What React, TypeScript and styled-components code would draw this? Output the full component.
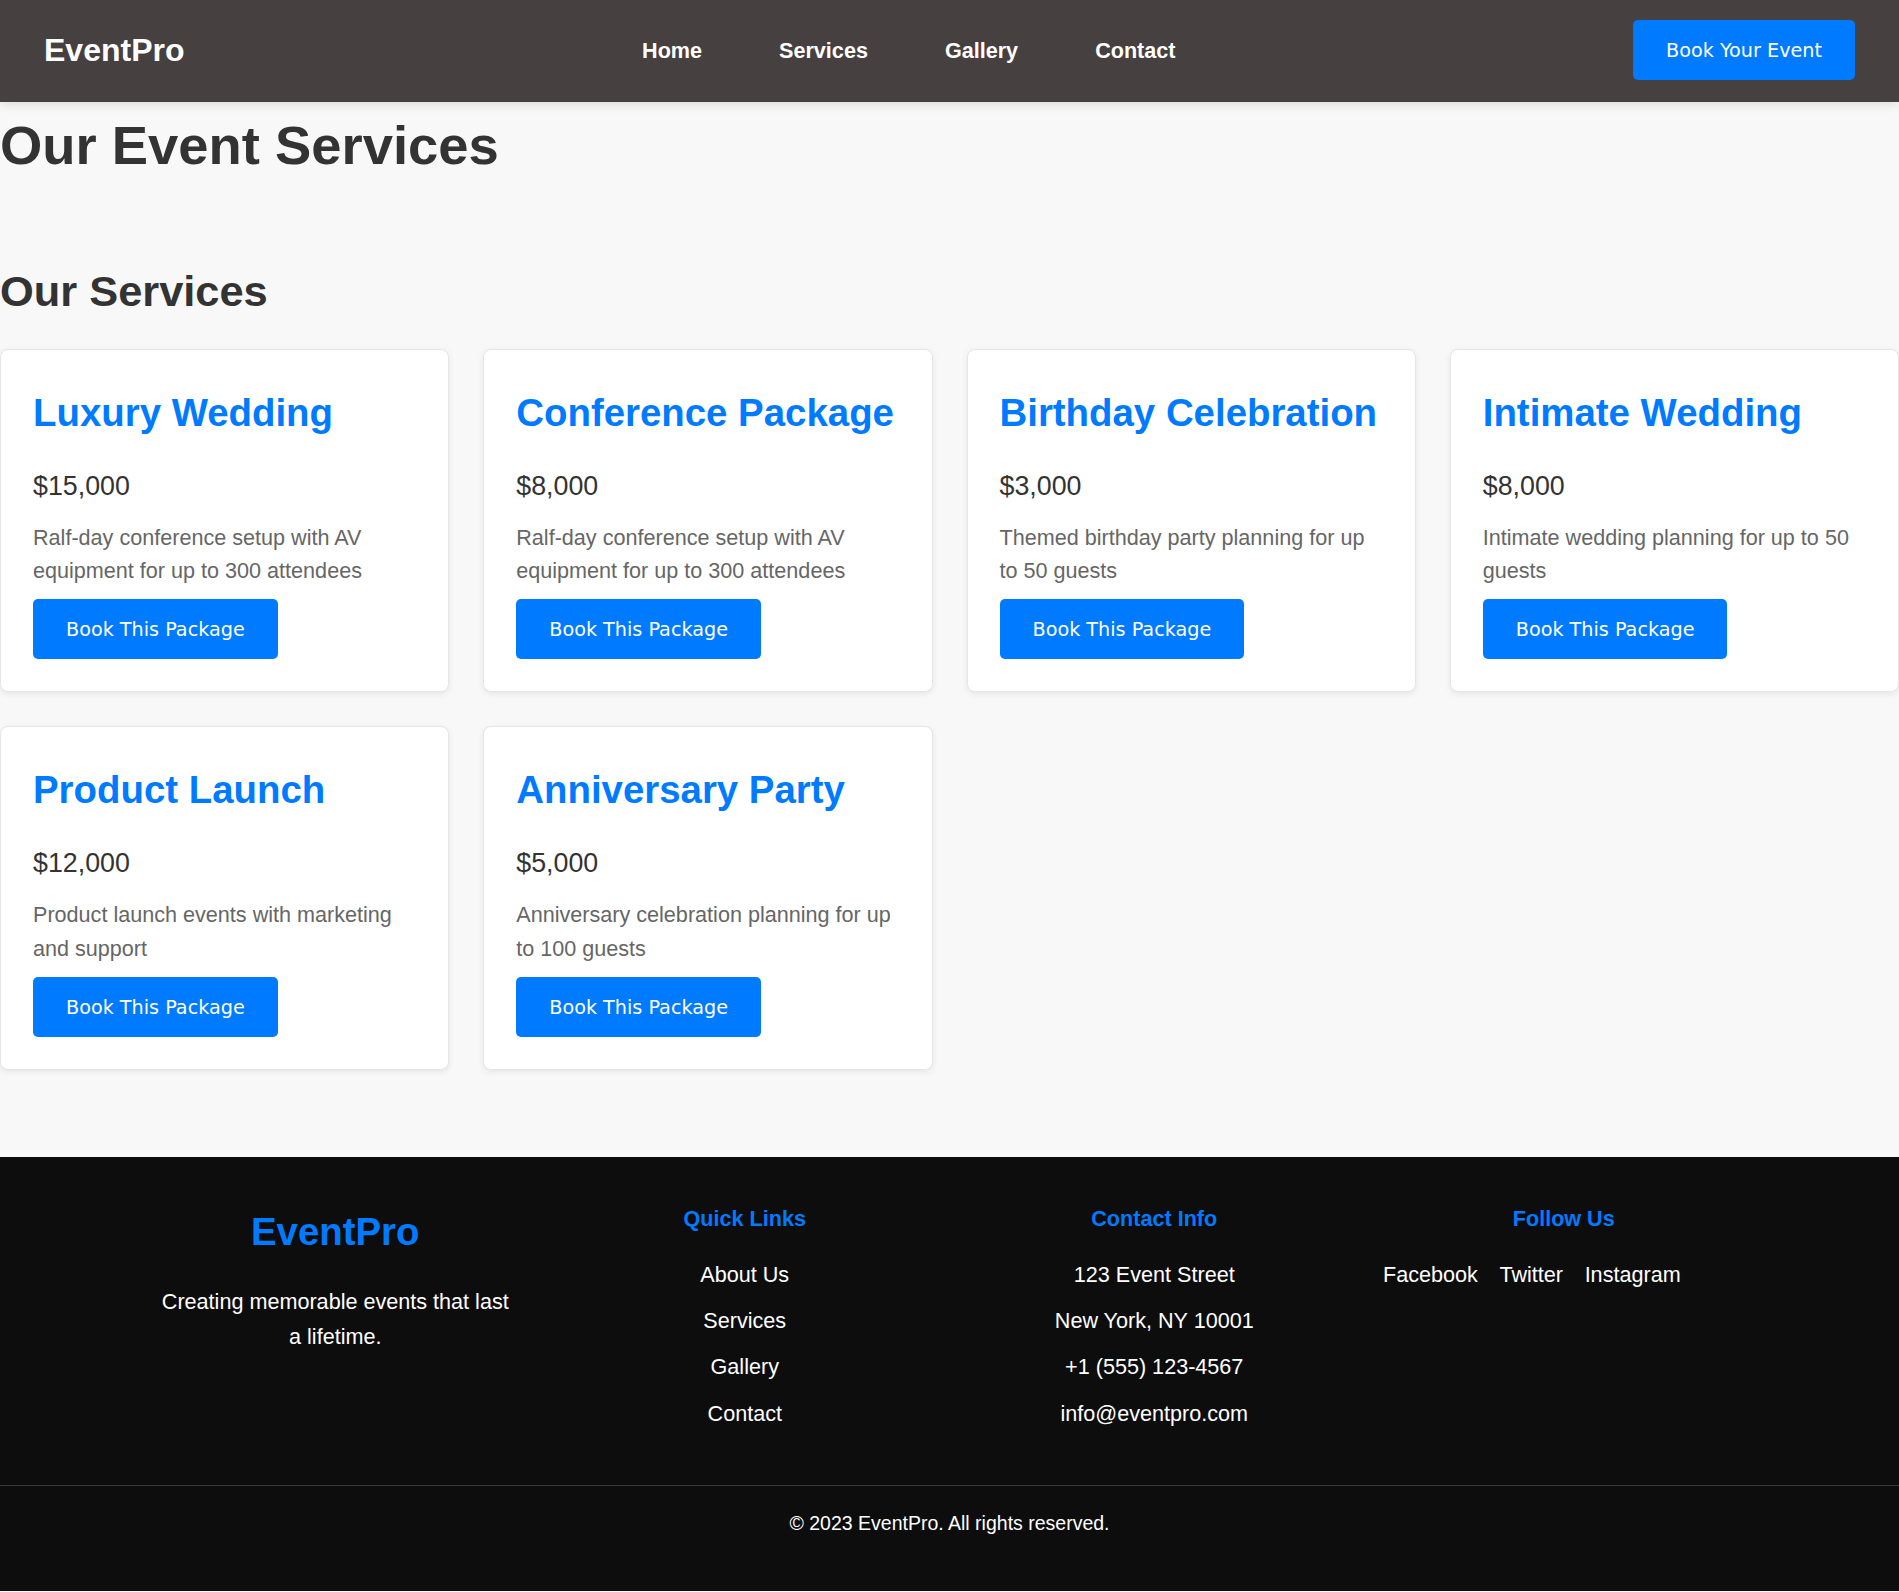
import React from "react";
import styled, { createGlobalStyle } from "styled-components";

const GlobalStyle = createGlobalStyle`
  * {
    box-sizing: border-box;
  }
  body {
    margin: 0;
    background: #f8f8f8;
    font-family: "Liberation Sans", Arial, sans-serif;
    color: #333;
  }
`;

const services = [
  {
    title: "Luxury Wedding",
    price: "$15,000",
    text: "Ralf-day conference setup with AV equipment for up to 300 attendees",
  },
  {
    title: "Conference Package",
    price: "$8,000",
    text: "Ralf-day conference setup with AV equipment for up to 300 attendees",
  },
  {
    title: "Birthday Celebration",
    price: "$3,000",
    text: "Themed birthday party planning for up to 50 guests",
  },
  {
    title: "Intimate Wedding",
    price: "$8,000",
    text: "Intimate wedding planning for up to 50 guests",
  },
  {
    title: "Product Launch",
    price: "$12,000",
    text: "Product launch events with marketing and support",
  },
  {
    title: "Anniversary Party",
    price: "$5,000",
    text: "Anniversary celebration planning for up to 100 guests",
  },
];

const Header = styled.header`
  display: flex;
  justify-content: space-between;
  align-items: center;
  padding: 20px 44px 22px;
  background: #464040;
  box-shadow: 0 2px 10px rgba(0, 0, 0, 0.12);
  position: relative;
  z-index: 1;
`;

const Logo = styled.div`
  color: #fff;
  font-size: 32px;
  font-weight: bold;
`;

const Nav = styled.nav`
  display: flex;
  gap: 77px;
  padding-top: 2px;
`;

const NavLink = styled.a`
  color: #fff;
  font-size: 21.6px;
  font-weight: bold;
  text-decoration: none;
`;

const Button = styled.button`
  background: #007bff;
  color: #fff;
  border: none;
  border-radius: 5px;
  padding: 20px 33px 18px;
  font-family: "DejaVu Sans", Verdana, sans-serif;
  font-size: 19.2px;
  line-height: 22px;
  cursor: pointer;
  align-self: flex-start;
`;

const Main = styled.main`
  padding-bottom: 87px;
`;

const PageTitle = styled.h1`
  margin: 11.5px 0 0;
  font-size: 54.4px;
  font-weight: bold;
  color: #333;
`;

const SectionTitle = styled.h2`
  margin: 90px 0 33px;
  font-size: 43.4px;
  font-weight: bold;
  color: #333;
`;

const Grid = styled.div`
  display: grid;
  grid-template-columns: repeat(4, 1fr);
  gap: 34px;
`;

const Card = styled.div`
  display: flex;
  flex-direction: column;
  background: #fff;
  border: 1px solid #e6e6e6;
  border-radius: 8px;
  box-shadow: 0 2px 6px rgba(0, 0, 0, 0.08);
  padding: 32px;
`;

const CardTitle = styled.h3`
  margin: 9px 0 36px;
  font-size: 38.4px;
  font-weight: bold;
  color: #007bff;
`;

const Price = styled.div`
  margin-bottom: 19px;
  font-size: 26.8px;
  color: #333;
`;

const Description = styled.p`
  margin: 0 0 12px;
  font-size: 21.6px;
  line-height: 1.55;
  color: #666;
`;

const Footer = styled.footer`
  background: #0d0d0d;
  color: #fff;
  padding-top: 49px;
`;

const FooterGrid = styled.div`
  display: grid;
  grid-template-columns: repeat(4, 1fr);
  gap: 48px;
  max-width: 1590px;
  margin: 0 auto;
  text-align: center;
`;

const FooterBrand = styled.h3`
  margin: 4px 0 31px;
  font-size: 38.4px;
  font-weight: bold;
  color: #007bff;
`;

const FooterText = styled.p`
  margin: 0;
  font-size: 21.6px;
  line-height: 1.6;
`;

const FooterHeading = styled.h4`
  margin: 0 0 26px;
  font-size: 21.6px;
  font-weight: bold;
  color: #007bff;
`;

const FooterList = styled.ul`
  list-style: none;
  margin: 0;
  padding: 0;
  display: flex;
  flex-direction: column;
  gap: 11.5px;
`;

const FooterItem = styled.li`
  font-size: 21.6px;
  line-height: 1.6;
`;

const FooterLink = styled.a`
  color: #fff;
  text-decoration: none;
`;

const Social = styled.div`
  display: flex;
  gap: 21.6px;
  font-size: 21.6px;
  line-height: 1.6;
`;

const FooterBottom = styled.div`
  margin-top: 54px;
  border-top: 1px solid #3a3a3a;
  padding: 22px 0 52px;
  text-align: center;
  font-size: 19.5px;
  line-height: 1.6;
`;

export default function App() {
  return (
    <>
      <GlobalStyle />
      <Header>
        <Logo>EventPro</Logo>
        <Nav>
          <NavLink href="#">Home</NavLink>
          <NavLink href="#">Services</NavLink>
          <NavLink href="#">Gallery</NavLink>
          <NavLink href="#">Contact</NavLink>
        </Nav>
        <Button>Book Your Event</Button>
      </Header>

      <Main>
        <PageTitle>Our Event Services</PageTitle>
        <section>
          <SectionTitle>Our Services</SectionTitle>
          <Grid>
            {services.map((s) => (
              <Card key={s.title}>
                <CardTitle>{s.title}</CardTitle>
                <Price>{s.price}</Price>
                <Description>{s.text}</Description>
                <Button>Book This Package</Button>
              </Card>
            ))}
          </Grid>
        </section>
      </Main>

      <Footer>
        <FooterGrid>
          <div>
            <FooterBrand>EventPro</FooterBrand>
            <FooterText>Creating memorable events that last a lifetime.</FooterText>
          </div>
          <div>
            <FooterHeading>Quick Links</FooterHeading>
            <FooterList>
              <FooterItem><FooterLink href="#">About Us</FooterLink></FooterItem>
              <FooterItem><FooterLink href="#">Services</FooterLink></FooterItem>
              <FooterItem><FooterLink href="#">Gallery</FooterLink></FooterItem>
              <FooterItem><FooterLink href="#">Contact</FooterLink></FooterItem>
            </FooterList>
          </div>
          <div>
            <FooterHeading>Contact Info</FooterHeading>
            <FooterList>
              <FooterItem>123 Event Street</FooterItem>
              <FooterItem>New York, NY 10001</FooterItem>
              <FooterItem>+1 (555) 123-4567</FooterItem>
              <FooterItem>info@eventpro.com</FooterItem>
            </FooterList>
          </div>
          <div>
            <FooterHeading>Follow Us</FooterHeading>
            <Social>
              <FooterLink href="#">Facebook</FooterLink>
              <FooterLink href="#">Twitter</FooterLink>
              <FooterLink href="#">Instagram</FooterLink>
            </Social>
          </div>
        </FooterGrid>
        <FooterBottom>© 2023 EventPro. All rights reserved.</FooterBottom>
      </Footer>
    </>
  );
}
